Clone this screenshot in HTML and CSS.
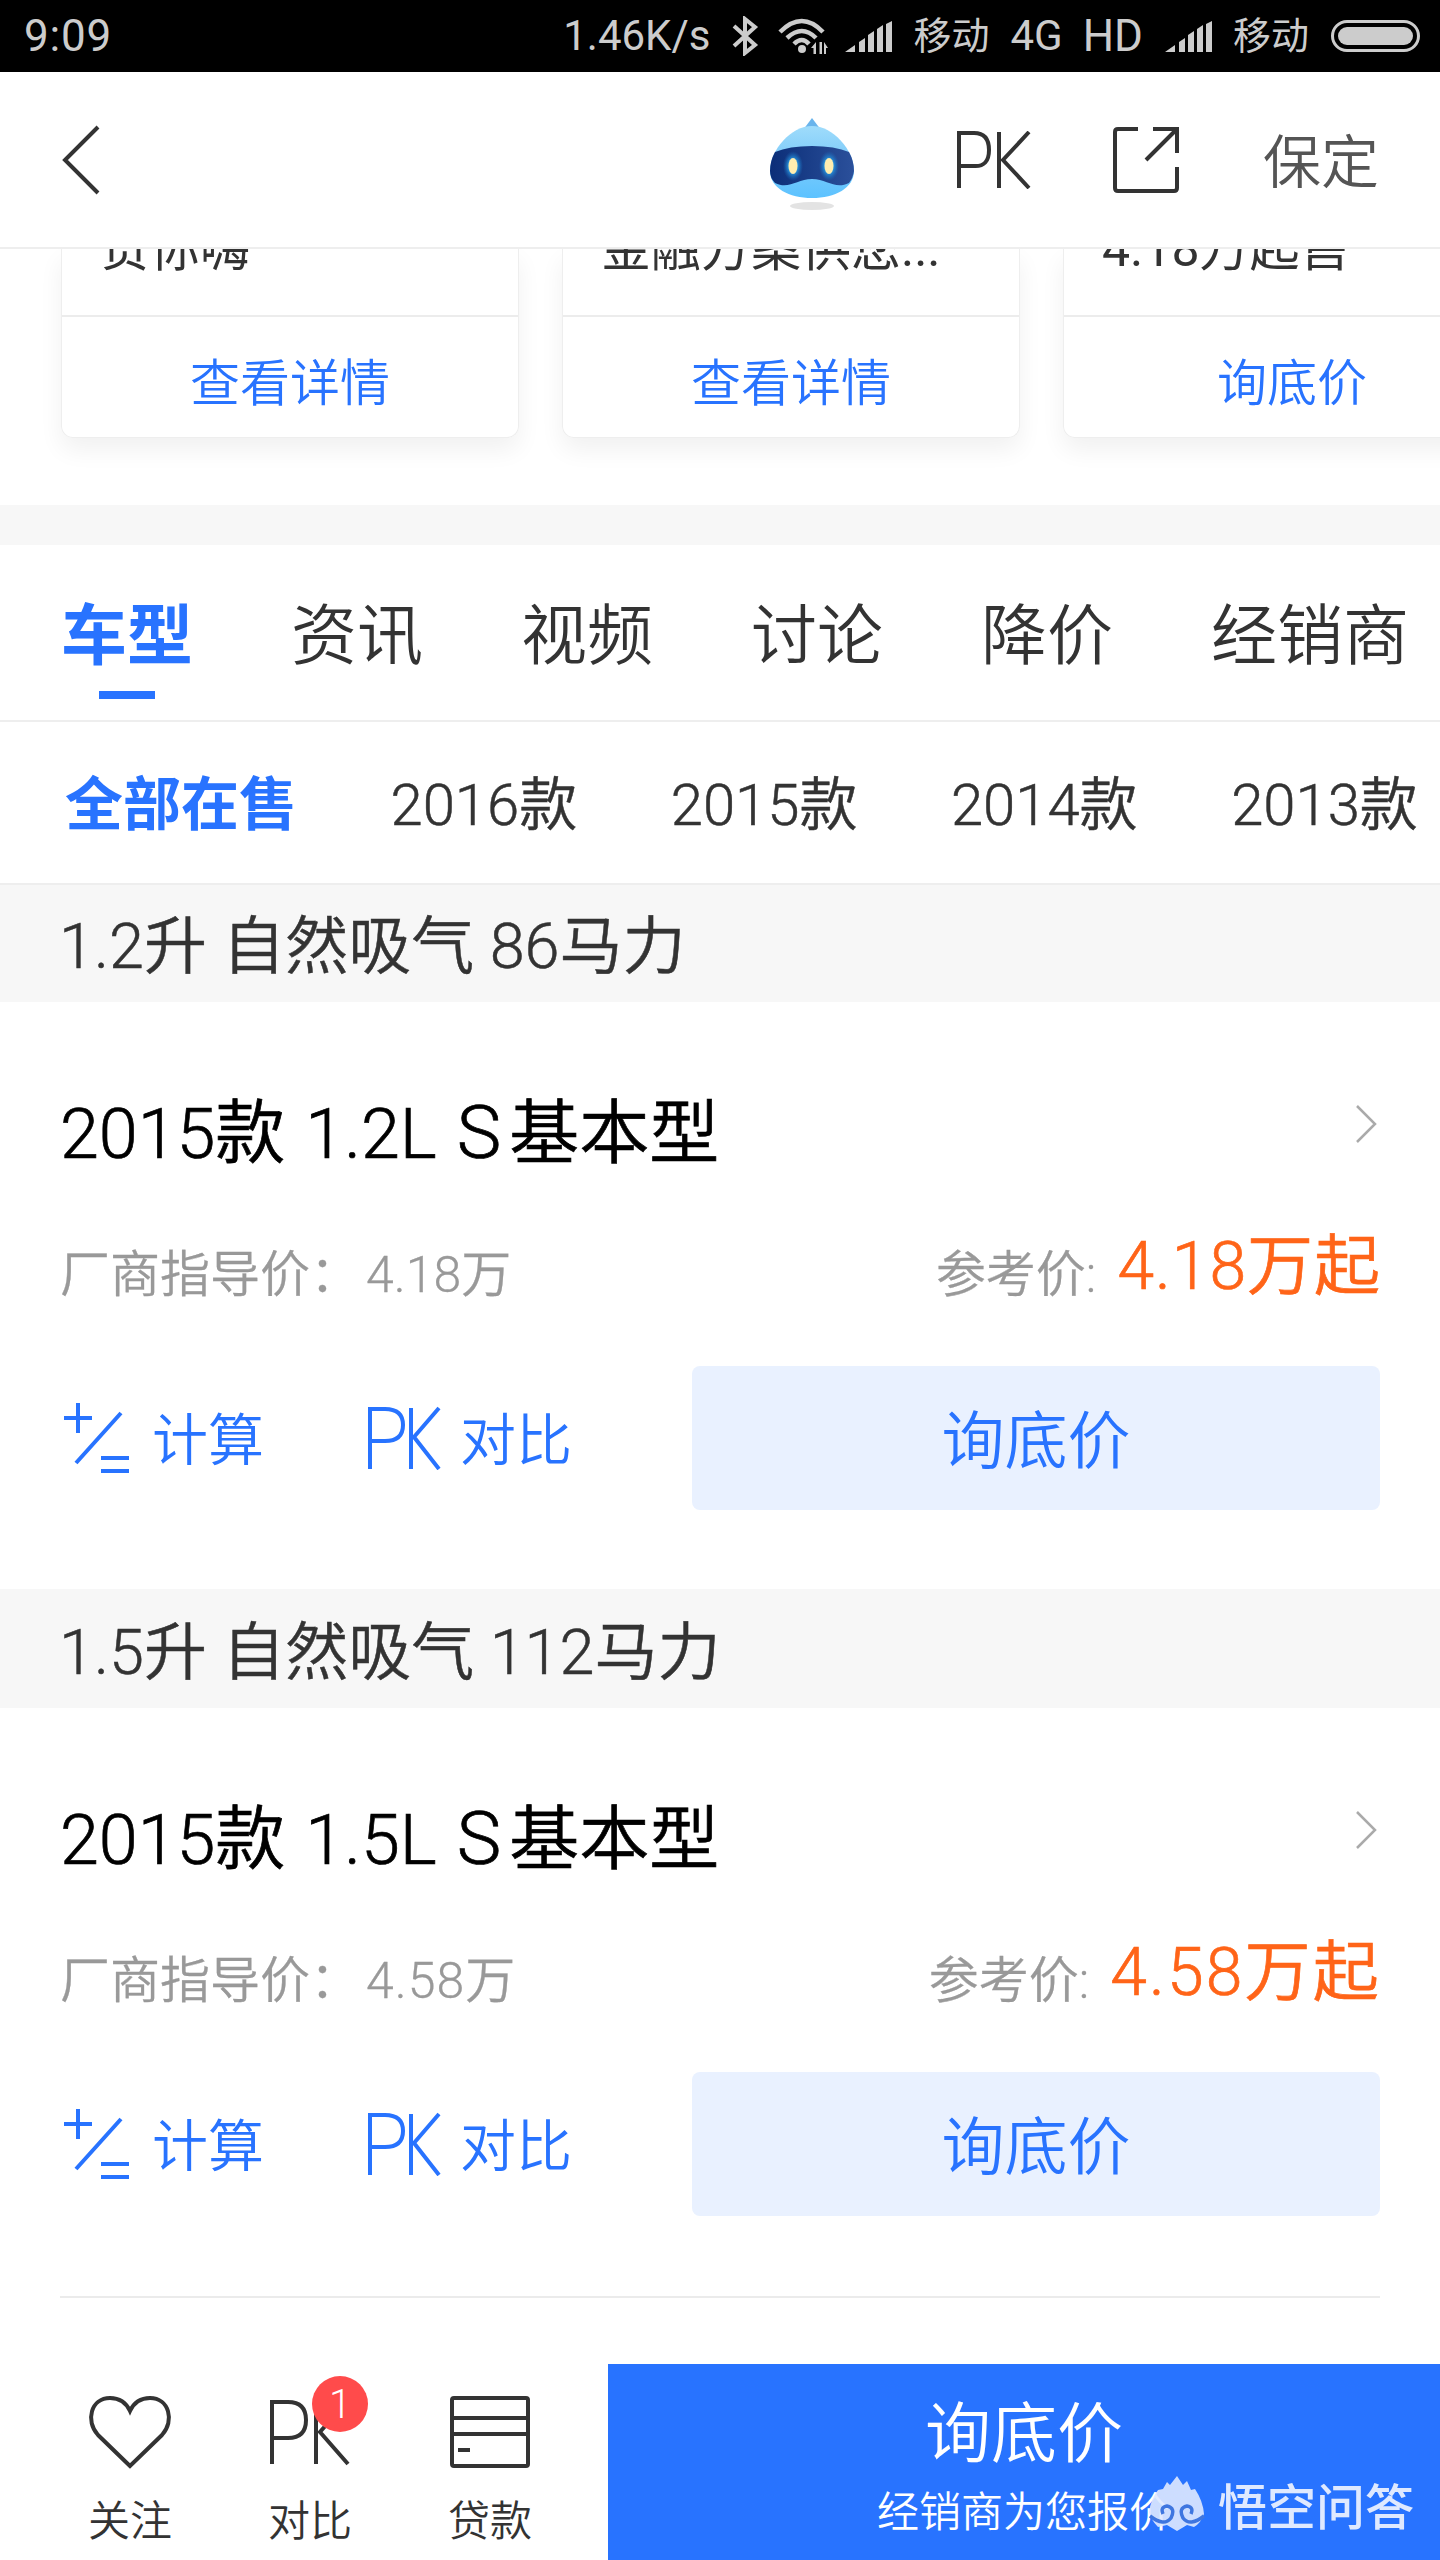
FILE: index.html
```html
<!DOCTYPE html>
<html lang="zh-CN">
<head>
<meta charset="utf-8">
<title>车型</title>
<link rel="stylesheet" href="styles.css">
</head>
<body>
<div class="status">
  <span class="time">9:09</span>
  <span class="speed">1.46K/s</span>
  <svg class="bt" width="28" height="40" viewBox="0 0 28 40"><path d="M3 10L24 29L14 37V3L24 11L3 30" fill="none" stroke="#ccc" stroke-width="4"/></svg>
  <svg class="wifi" width="52" height="36" viewBox="0 0 52 36"><g fill="none" stroke="#ccc" stroke-width="4.500"><path d="M2 14Q24 -8 45 14"/><path d="M9 20Q24 6 38 20"/><path d="M16 26Q24 18 31 26"/></g><circle cx="24" cy="31" r="4" fill="#ccc"/><path d="M38 24V36H35.500V30H33ZM41.500 24H44V36H41.500ZM46 24L50 30H48V36H46Z" fill="#ccc"/></svg>
  <svg class="sig" width="48" height="31" viewBox="0 0 48 31"><path d="M0 31L10 24V31ZM14 21L20 17V31H14ZM23 14L29 10V31H23ZM32 8L38 4V31H32ZM41 3L47 0V31H41Z" fill="#ccc"/></svg>
  <span class="op1">移动</span>
  <span class="net">4G</span>
  <span class="hd">HD</span>
  <svg class="sig2" width="48" height="31" viewBox="0 0 48 31"><path d="M0 31L10 24V31ZM14 21L20 17V31H14ZM23 14L29 10V31H23ZM32 8L38 4V31H32ZM41 3L47 0V31H41Z" fill="#ccc"/></svg>
  <span class="op2">移动</span>
  <span class="battery"><i></i></span>
</div>

<header class="header">
  <svg width="40" height="72" viewBox="0 0 40 72"><path d="M38 3L5 36L38 69" fill="none" stroke="#333" stroke-width="4"/></svg>
  <svg class="robot" width="86" height="94" viewBox="0 0 86 94">
    <defs>
      <linearGradient id="body" x1="0" y1="0" x2="0" y2="1"><stop offset="0" stop-color="#9fdcfb"/><stop offset=".4" stop-color="#82cdfa"/><stop offset="1" stop-color="#5cc2ff"/></linearGradient>
      <linearGradient id="visor" x1="0" y1="0" x2="1" y2="0"><stop offset="0" stop-color="#0b2e78"/><stop offset="1" stop-color="#2b509b"/></linearGradient>
      <radialGradient id="glow"><stop offset=".4" stop-color="#2aa0e8"/><stop offset="1" stop-color="#1b6fc0" stop-opacity="0"/></radialGradient>
    </defs>
    <ellipse cx="43" cy="88" rx="22" ry="4" fill="#e3e3e3"/>
    <path d="M34 12L43 0L52 12Z" fill="#69b4ec"/>
    <path d="M43 8C64 8 85 32 85 53C85 70 66 80 43 80S1 70 1 53C1 32 22 8 43 8Z" fill="url(#body)"/>
    <path d="M6 34Q20 28 43 28T80 34Q85 43 85 53Q84 60 80 65C66 72 58 61 43 61S20 72 6 65Q1 60 1 53Q1 43 6 34Z" fill="url(#visor)"/>
    <ellipse cx="24" cy="48" rx="10" ry="15" fill="url(#glow)"/><ellipse cx="60" cy="48" rx="10" ry="15" fill="url(#glow)"/>
    <ellipse cx="24" cy="48" rx="4.500" ry="8" fill="#ffedaf"/><ellipse cx="60" cy="48" rx="4.500" ry="8" fill="#ffedaf"/>
  </svg>
  <svg class="pk" width="75" height="58" viewBox="0 0 75 58"><path d="M3 57V2H18Q33 2 33 19T18 35H3M43 1V57M73 1L47 29L73 57" fill="none" stroke="#333" stroke-width="4"/></svg>
  <svg class="share" width="66" height="68" viewBox="0 0 66 68"><path d="M25 3H5Q2 3 2 6V62Q2 65 5 65H61Q64 65 64 62V41M40 3H64V27M64 3L33 34" fill="none" stroke="#333" stroke-width="4"/></svg>
  <span class="city">保定</span>
</header>

<section class="promos">
  <article class="promo"><p>贷你嗨</p><a>查看详情</a></article>
  <article class="promo"><p>金融方案供您...</p><a>查看详情</a></article>
  <article class="promo"><p>4.18万起售</p><a>询底价</a></article>
</section>

<nav class="tabs"><span class="on">车型</span><span>资讯</span><span>视频</span><span>讨论</span><span>降价</span><span>经销商</span></nav>
<nav class="years"><span class="on">全部在售</span><span>2016款</span><span>2015款</span><span>2014款</span><span>2013款</span></nav>

<h2 class="group first">1.2升 自然吸气 86马力</h2>
<section class="car">
  <div class="name"><h3>2015款 1.2L <i>S</i>基本型</h3><svg width="24" height="40" viewBox="0 0 24 40"><path d="M1 2L19 20L1 38" fill="none" stroke="#aaa" stroke-width="2.500"/></svg></div>
  <div class="prices"><span class="guide">厂商指导价：<b>4.18万</b></span><span class="ref">参考价:</span><span class="now">4.18万起</span></div>
  <div class="actions">
    <svg class="calc" width="66" height="74" viewBox="0 0 66 74"><path d="M0 17H28M14 2V32M57 12L12 62M37 57H65M37 70H65" fill="none" stroke="#2873ff" stroke-width="4"/></svg><span class="a1">计算</span>
    <svg class="pkb" width="73" height="64" viewBox="0 0 73 64"><path d="M2 63V3H17Q35 3 35 19T17 35H2M43 2V63M71 2L46 31L71 63" fill="none" stroke="#2873ff" stroke-width="4"/></svg><span class="a2">对比</span>
    <a class="ask">询底价</a>
  </div>
</section>

<h2 class="group">1.5升 自然吸气 112马力</h2>
<section class="car">
  <div class="name"><h3>2015款 1.5L <i>S</i>基本型</h3><svg width="24" height="40" viewBox="0 0 24 40"><path d="M1 2L19 20L1 38" fill="none" stroke="#aaa" stroke-width="2.500"/></svg></div>
  <div class="prices"><span class="guide">厂商指导价：<b class="wide">4.58万</b></span><span class="ref">参考价:</span><span class="now wide">4.58万起</span></div>
  <div class="actions">
    <svg class="calc" width="66" height="74" viewBox="0 0 66 74"><path d="M0 17H28M14 2V32M57 12L12 62M37 57H65M37 70H65" fill="none" stroke="#2873ff" stroke-width="4"/></svg><span class="a1">计算</span>
    <svg class="pkb" width="73" height="64" viewBox="0 0 73 64"><path d="M2 63V3H17Q35 3 35 19T17 35H2M43 2V63M71 2L46 31L71 63" fill="none" stroke="#2873ff" stroke-width="4"/></svg><span class="a2">对比</span>
    <a class="ask">询底价</a>
  </div>
</section>
<hr class="rule">

<footer class="bar">
  <div class="tool"><svg width="84" height="76" viewBox="0 0 84 76"><path d="M42 72L10 41C-3 27 3 4 22 4Q36 4 42 17Q48 4 62 4C81 4 87 27 74 41Z" fill="none" stroke="#333" stroke-width="4"/></svg><span>关注</span></div>
  <div class="tool"><svg width="84" height="76" viewBox="0 0 84 76"><path d="M4 70V8H20Q38 8 38 26T20 44H4M48 6V70M80 6L52 38L80 70" fill="none" stroke="#333" stroke-width="4"/></svg><em class="badge">1</em><span>对比</span></div>
  <div class="tool"><svg width="84" height="76" viewBox="0 0 84 76"><path d="M6 4H78Q80 4 80 6V70Q80 72 78 72H6Q4 72 4 70V6Q4 4 6 4ZM4 24H80M4 40H80M10 56H22" fill="none" stroke="#333" stroke-width="4"/></svg><span>贷款</span></div>
  <a class="cta"><strong>询底价</strong><span>经销商为您报价</span></a>
  <div class="mark"><svg width="56" height="56" viewBox="0 0 56 56"><path d="M28 0L34 9L38 5L42 14L46 13Q54 25 55 38Q52 47 45 51L38 49L28 55L18 49L9 51Q2 44 0 36Q2 23 9 14L14 13L18 6L21 9Z" fill="#dfe9ff" fill-opacity=".9"/><path d="M1 40Q15 51 22 42Q27 32 18 30Q11 31 14 38M55 40Q41 51 34 42Q29 32 38 30Q45 31 42 38" fill="none" stroke="#3f76e0" stroke-width="3.500"/></svg><span>悟空问答</span></div>
</footer>
</body>
</html>
```
FILE: styles.css
```css
* { box-sizing: border-box; margin: 0; padding: 0; }
body {
  width: 1440px; height: 2560px; overflow: hidden; background: #fff; color: #333;
  font-family: "Noto Sans CJK SC", sans-serif; font-weight: 350;
  display: flex; flex-direction: column;
}
svg { display: block; flex: none; }
span, a, h2, h3, p { white-space: nowrap; }
.status {
  height: 72px; background: #000; color: #ccc; flex: none; display: flex; align-items: center;
  padding: 0 20px 0 24px; font: 400 42px/74px Roboto, "Noto Sans CJK SC", sans-serif;
}
.time { font-size: 44px; letter-spacing: .8px; }
.speed { margin-left: auto; }
.bt { margin-left: 21px; }
.wifi { margin-left: 19px; }
.sig { margin-left: 15px; }
.op1, .op2 { font-size: 38px; margin-left: 20px; }
.net { margin-left: 21px; }
.hd { margin-left: 20px; font-size: 44px; }
.sig2 { margin-left: 22px; }
.battery { width: 89px; height: 32px; border: 3px solid #ccc; border-radius: 16px; padding: 4px; margin-left: 22px; }
.battery i { display: block; height: 18px; border-radius: 9px; background: #ccc; }

.header { height: 177px; flex: none; border-bottom: 2px solid #eee; display: flex; align-items: center; padding: 0 60px; background: #fff; }
.robot { margin: 10px 0 0 669px; }
.pk { margin-left: 101px; }
.share { margin-left: 82px; }
.city { margin: -4px 0 0 84px; font-size: 58px; color: #555; }

.promos { height: 256px; flex: none; overflow: hidden; display: flex; gap: 43px; padding-left: 61px; }
.promo { width: 458px; height: 189px; flex: none; border: 1px solid #eee; border-top: 0; border-radius: 0 0 12px 12px; box-shadow: 0 12px 24px rgba(0,0,0,.06); }
.promo p { height: 68px; border-bottom: 2px solid #ececec; padding-left: 38px; font: 400 50px/0 Roboto, "Noto Sans CJK SC", sans-serif; }
.promo a { display: block; text-align: center; color: #2873ff; font-size: 50px; line-height: 124px; }

.tabs { height: 217px; flex: none; border-top: 40px solid #f7f7f7; border-bottom: 2px solid #eee; display: flex; gap: 98px; padding-left: 61px; font-size: 66px; line-height: 170px; }
.tabs .on, .years .on { color: #2873ff; font-weight: 700; }
.tabs .on { position: relative; }
.tabs .on::after { content: ""; position: absolute; left: 38px; top: 146px; width: 56px; height: 8px; background: #2873ff; }
.years { height: 161px; flex: none; display: flex; gap: 93.5px; padding-left: 65px; font-size: 58px; line-height: 166px; font-family: Roboto, "Noto Sans CJK SC", sans-serif; -webkit-text-stroke: .5px currentColor; }
.years .on { -webkit-text-stroke: 0; }

.group { height: 119px; flex: none; background: #f7f7f7; padding-left: 59px; font: 350 63px/128px Roboto, "Noto Sans CJK SC", sans-serif; -webkit-text-stroke: .5px currentColor; }
.group.first { border-top: 2px solid #eee; line-height: 124px; }
.car { height: 587px; flex: none; padding: 64px 60px 0; }
.name { height: 130px; display: flex; justify-content: space-between; align-items: flex-start; color: #000; }
.name h3 { font: 350 70px/136px Roboto, "Noto Sans CJK SC", sans-serif; word-spacing: 3px; -webkit-text-stroke: .7px currentColor; }
.name i { font-style: normal; font-size: 75px; line-height: 0; margin-right: 8px; }
.name svg { margin-top: 38px; }
.prices { height: 142px; display: flex; align-items: flex-start; color: #999; font-size: 50px; line-height: 159px; font-family: Roboto, "Noto Sans CJK SC", sans-serif; -webkit-text-stroke: .3px currentColor; }
.prices b { font-weight: 350; margin-left: 6px; }
.prices b.wide { letter-spacing: 1px; }
.ref { margin-left: auto; }
.now { margin: 0 -1px 0 21px; font-size: 66px; line-height: 142px; letter-spacing: 1px; color: #ff6418; -webkit-text-stroke: .7px currentColor; }
.now.wide { letter-spacing: 2.2px; }
.actions { height: 144px; margin-top: 28px; display: flex; align-items: center; color: #2873ff; font-size: 56px; }
.a1, .a2 { margin-top: -6px; }
.calc { margin-left: 4px; }
.a1 { margin-left: 22px; }
.pkb { margin-left: 104px; }
.a2 { margin-left: 19px; }
.ask { margin-left: auto; width: 688px; height: 144px; border-radius: 8px; background: #e9f1ff; text-align: center; font-size: 63px; line-height: 140px; }
.rule { margin: 1px 60px 0; height: 2px; border: 0; background: #ebebeb; flex: none; }

.bar { height: 196px; margin-top: auto; flex: none; display: flex; padding-left: 40px; position: relative; }
.tool { width: 180px; padding-top: 30px; position: relative; display: flex; flex-direction: column; align-items: center; font-size: 42px; line-height: 60px; }
.tool span { margin-top: 18px; }
.badge { position: absolute; left: 92px; top: 12px; width: 56px; height: 56px; border-radius: 50%; background: #ff4b4b; color: #fff; font: 300 40px/58px Roboto, sans-serif; text-align: center; }
.cta { margin-left: 28px; flex: 1; background: #2873ff; color: #fff; display: flex; flex-direction: column; align-items: center; }
.cta strong { font-size: 66px; font-weight: 350; line-height: 90px; margin-top: 19px; }
.cta span { font-size: 42px; line-height: 60px; margin-top: 6px; }
.mark { position: absolute; left: 1149px; top: 112px; display: flex; align-items: center; color: #dfe9ff; font-size: 49px; line-height: 56px; font-weight: 500; }
.mark span { margin-left: 13px; }
```
